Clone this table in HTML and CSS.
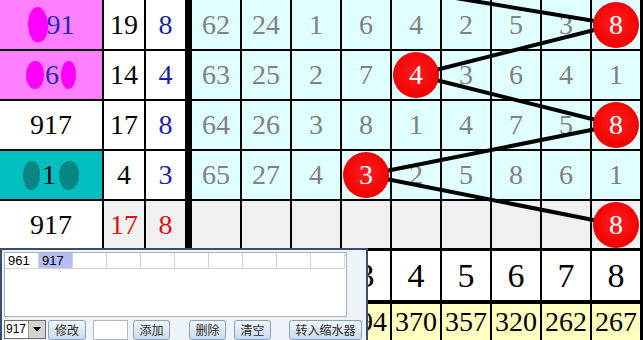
FILE: index.html
```html
<!DOCTYPE html>
<html>
<head>
<meta charset="utf-8">
<link rel="stylesheet" href="styles.css">
</head>
<body>
<div class="board">
  <div class="grid">
    <!-- row 0 -->
    <div class="c name pink blue"><span class="blob mag b0"></span>91</div>
    <div class="c k">19</div>
    <div class="c n3 bl">8</div>
    <div class="c d">62</div><div class="c d">24</div><div class="c d">1</div><div class="c d">6</div><div class="c d">4</div><div class="c d">2</div><div class="c d">5</div><div class="c d">3</div><div class="c d"><span class="dot">8</span></div>
    <!-- row 1 -->
    <div class="c name pink blue"><span class="blob mag b1a"></span>6<span class="blob mag b1b"></span></div>
    <div class="c k">14</div>
    <div class="c n3 bl">4</div>
    <div class="c d">63</div><div class="c d">25</div><div class="c d">2</div><div class="c d">7</div><div class="c d"><span class="dot">4</span></div><div class="c d">3</div><div class="c d">6</div><div class="c d">4</div><div class="c d">1</div>
    <!-- row 2 -->
    <div class="c name">917</div>
    <div class="c k">17</div>
    <div class="c n3 bl">8</div>
    <div class="c d">64</div><div class="c d">26</div><div class="c d">3</div><div class="c d">8</div><div class="c d">1</div><div class="c d">4</div><div class="c d">7</div><div class="c d">5</div><div class="c d"><span class="dot">8</span></div>
    <!-- row 3 -->
    <div class="c name teal"><span class="blob dteal b3a"></span>1<span class="blob dteal b3b"></span></div>
    <div class="c k">4</div>
    <div class="c n3 bl">3</div>
    <div class="c d">65</div><div class="c d">27</div><div class="c d">4</div><div class="c d"><span class="dot">3</span></div><div class="c d">2</div><div class="c d">5</div><div class="c d">8</div><div class="c d">6</div><div class="c d">1</div>
    <!-- row 4 -->
    <div class="c name">917</div>
    <div class="c k grey red">17</div>
    <div class="c n3 grey red">8</div>
    <div class="c e"></div><div class="c e"></div><div class="c e"></div><div class="c e"></div><div class="c e"></div><div class="c e"></div><div class="c e"></div><div class="c e"></div><div class="c e"><span class="dot">8</span></div>
    <!-- header row -->
    <div class="c h"></div><div class="c h"></div><div class="c h n3"></div>
    <div class="c h"></div><div class="c h"></div><div class="c h"></div><div class="c h">3</div><div class="c h">4</div><div class="c h">5</div><div class="c h">6</div><div class="c h">7</div><div class="c h">8</div>
    <!-- total row -->
    <div class="c y"></div><div class="c y"></div><div class="c y n3"></div>
    <div class="c y"></div><div class="c y"></div><div class="c y"></div><div class="c y">294</div><div class="c y">370</div><div class="c y">357</div><div class="c y">320</div><div class="c y">262</div><div class="c y">267</div>
  </div>

  <svg class="links" width="643" height="248" viewBox="0 0 643 248">
    <g stroke="#000" stroke-width="4" stroke-linecap="round">
      <line x1="316" y1="-25" x2="616" y2="24.5"/>
      <line x1="416" y1="75" x2="616" y2="24.5"/>
      <line x1="416" y1="75" x2="616" y2="125"/>
      <line x1="366" y1="175" x2="616" y2="125"/>
      <line x1="366" y1="175" x2="616" y2="224.5"/>
    </g>
  </svg>

  <div class="panel">
    <div class="list">
      <div class="lrow">
        <span class="li">961</span><span class="li sel">917</span><span class="li"></span><span class="li"></span><span class="li"></span><span class="li"></span><span class="li"></span><span class="li"></span><span class="li"></span><span class="li"></span>
      </div>
    </div>
    <div class="controls">
      <div class="combo"><span class="cv">917</span><span class="cb"><svg width="8" height="5" viewBox="0 0 8 5"><path d="M0 0H8L4 4.5Z" fill="#000"/></svg></span></div>
      <button class="btn w-edit">修改</button>
      <input class="inp" type="text">
      <button class="btn w-add">添加</button>
      <button class="btn w-del">删除</button>
      <button class="btn w-clr">清空</button>
      <button class="btn w-go">转入缩水器</button>
    </div>
  </div>
</div>
</body>
</html>
```

FILE: styles.css
```css
html, body {
  margin: 0;
  padding: 0;
  background: #fff;
}
body {
  width: 643px;
  height: 340px;
  overflow: hidden;
  font-family: "Liberation Serif", "Times New Roman", serif;
}
.board {
  position: relative;
  width: 643px;
  height: 340px;
  background: #000;
  overflow: hidden;
}
.grid {
  display: grid;
  grid-template-columns: 102px 40px 44px repeat(9, 48px);
  grid-template-rows: 49px 48px 48px 48px 47px 50px 38px;
  gap: 2px;
}
.c {
  display: flex;
  align-items: center;
  justify-content: center;
  font-size: 28px;
  line-height: 1;
  background: #fff;
  color: #000;
  box-sizing: border-box;
}
.n3 {
  border-right: 5px solid #000;
}
.pink { background: #ff80ff; }
.teal { background: #00bfbf; }
.blue { color: #2828b8; }
.bl { color: #1c1ca8; }
.red { color: #e01010; }
.grey { background: #f0f0f0; }
.d {
  background: #e0ffff;
  color: #808080;
}
.e { background: #f0f0f0; }
.h {
  border-top: 1px solid #000;
  font-size: 34px;
}
.y {
  background: #ffffc0;
  border-top: 2px solid #000;
  font-size: 28px;
}
.blob {
  display: inline-block;
  border-radius: 50% 45% 50% 48%;
}
.mag { background: #ff00ff; }
.dteal { background: #0a8585; }
.b0 { width: 20px; height: 35px; margin-right: -1px; border-radius: 55% 45% 50% 40%; transform: rotate(-6deg); }
.b1a { width: 18px; height: 28px; margin-right: 1px; }
.b1b { width: 15px; height: 28px; margin-left: 2px; }
.b3a { width: 17px; height: 29px; margin-right: 2px; }
.b3b { width: 20px; height: 29px; margin-left: 3px; }

.dot {
  position: relative;
  z-index: 2;
  width: 46px;
  height: 46px;
  border-radius: 50%;
  background: radial-gradient(circle at 50% 45%, #ff2020 0%, #f20000 70%, #e00000 100%);
  color: #fff;
  display: flex;
  align-items: center;
  justify-content: center;
  font-size: 28px;
}

.links {
  position: absolute;
  left: 0;
  top: 0;
  z-index: 1;
  pointer-events: none;
}

.panel {
  position: absolute;
  left: 0;
  top: 248px;
  z-index: 3;
  width: 368px;
  height: 94px;
  box-sizing: border-box;
  border: 2px solid #3b4d6b;
  border-bottom: none;
  background: #eef3f9;
  padding: 2px 0 0 2px;
  font-family: "Liberation Sans", Arial, sans-serif;
}
.list {
  width: 343px;
  height: 65px;
  box-sizing: border-box;
  background: #fff;
  border: 1px solid #a8b0ba;
}
.lrow {
  display: flex;
  height: 16px;
}
.li {
  width: 30px;
  height: 15px;
  border-right: 1px solid #d2d2d2;
  border-bottom: 1px solid #d2d2d2;
  font-size: 13px;
  line-height: 15px;
  padding-left: 3px;
  color: #000;
}
.li.sel { background: #b6bdf2; }

.controls {
  display: flex;
  align-items: flex-start;
  margin-top: 3px;
  height: 20px;
}
.combo {
  display: flex;
  width: 42px;
  height: 19px;
  box-sizing: border-box;
  border: 1px solid #6e6e6e;
  background: #fff;
}
.cv {
  flex: 1;
  font-size: 12px;
  line-height: 17px;
  padding-left: 1px;
  color: #000;
}
.cb {
  width: 16px;
  background: #d6d3ce;
  border-left: 1px solid #9a9a9a;
  display: flex;
  align-items: center;
  justify-content: center;
}
.btn {
  height: 20px;
  margin: 0;
  padding: 0;
  box-sizing: border-box;
  border: 1px solid #86a3c0;
  border-radius: 3px;
  background: linear-gradient(#f4f8fd, #dae6f3 55%, #cddcee);
  font-family: "Noto Sans CJK SC", sans-serif;
  font-size: 12px;
  line-height: 18px;
  color: #2d2d2d;
}
.inp {
  width: 35px;
  height: 20px;
  margin: 0 0 0 7px;
  padding: 0;
  box-sizing: border-box;
  border: 1px solid #b0b8c2;
  background: #fff;
}
.w-edit { width: 38px; margin-left: 2px; }
.w-add { width: 37px; margin-left: 5px; }
.w-del { width: 37px; margin-left: 19px; }
.w-clr { width: 37px; margin-left: 8px; }
.w-go { width: 73px; margin-left: 18px; }
```
